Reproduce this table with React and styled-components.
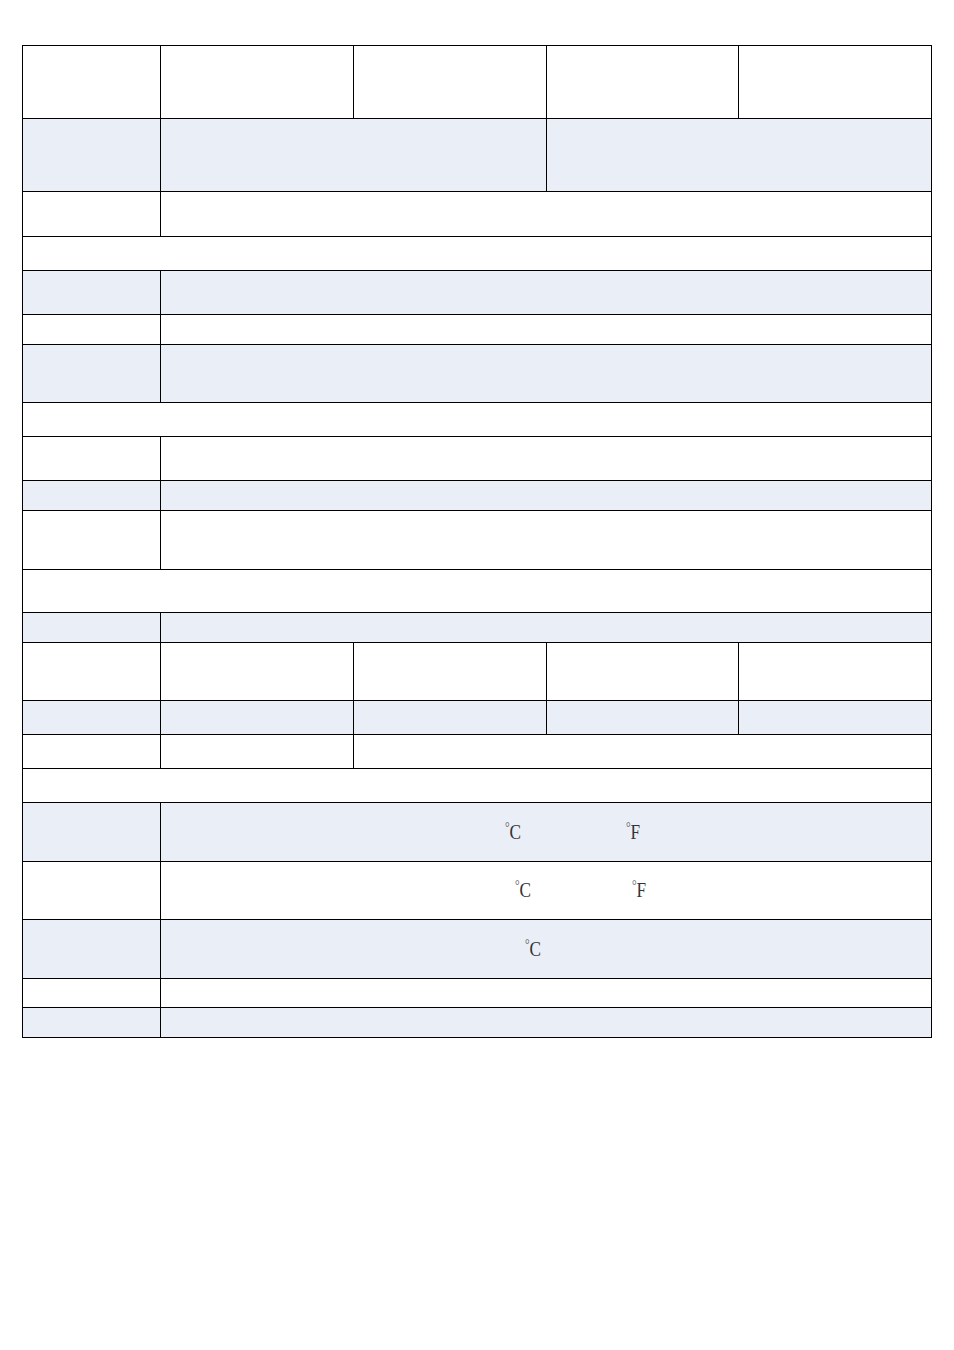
import React from "react";
import styled, { createGlobalStyle } from "styled-components";

const Global = createGlobalStyle`
  html, body { margin: 0; padding: 0; background: #ffffff; }
  body { font-family: "Liberation Serif", serif; }
`;

const COLS = "137px 192px 192px 191px 192px";
const BLUE = "#eaeff7";

const Page = styled.div`
  width: 954px;
  min-height: 1350px;
  padding: 45px 0 0 22px;
  box-sizing: border-box;
`;

const Table = styled.div`
  width: 910px;
  box-sizing: border-box;
  display: flex;
  flex-direction: column;
  gap: 1px;
  padding: 1px;
  background: #000000;
`;

const Row = styled.div`
  display: grid;
  grid-template-columns: ${COLS};
  gap: 1px;
  height: ${(p) => p.$h}px;
`;

const Cell = styled.div`
  grid-column: span ${(p) => p.$span || 1};
  background: ${(p) => (p.$blue ? BLUE : "#ffffff")};
  display: flex;
  align-items: center;
`;

const Unit = styled.span`
  margin-left: ${(p) => p.$ml}px;
  font-family: "Liberation Serif", "DejaVu Serif", serif;
  font-size: 21px;
  line-height: 1;
  color: #333;
  display: inline-flex;
  align-items: flex-start;
  transform: scaleX(0.82);
  transform-origin: left center;
`;

const Deg = styled.span`
  font-size: 14px;
  line-height: 1;
  margin-top: -1px;
  color: #555;
`;

const rows = [
  { h: 72, cells: [{}, {}, {}, {}, {}] },
  { h: 72, blue: true, cells: [{}, { span: 2 }, { span: 2 }] },
  { h: 44, cells: [{}, { span: 4 }] },
  { h: 33, cells: [{ span: 5 }] },
  { h: 43, blue: true, cells: [{}, { span: 4 }] },
  { h: 29, cells: [{}, { span: 4 }] },
  { h: 57, blue: true, cells: [{}, { span: 4 }] },
  { h: 33, cells: [{ span: 5 }] },
  { h: 43, cells: [{}, { span: 4 }] },
  { h: 29, blue: true, cells: [{}, { span: 4 }] },
  { h: 58, cells: [{}, { span: 4 }] },
  { h: 42, cells: [{ span: 5 }] },
  { h: 29, blue: true, cells: [{}, { span: 4 }] },
  { h: 57, cells: [{}, {}, {}, {}, {}] },
  { h: 33, blue: true, cells: [{}, {}, {}, {}, {}] },
  { h: 33, cells: [{}, {}, { span: 3 }] },
  { h: 33, cells: [{ span: 5 }] },
  {
    h: 58,
    blue: true,
    cells: [{}, { span: 4, units: [["C", 344], ["F", 101]] }],
  },
  { h: 57, cells: [{}, { span: 4, units: [["C", 354], ["F", 97]] }] },
  { h: 58, blue: true, cells: [{}, { span: 4, units: [["C", 364]] }] },
  { h: 28, cells: [{}, { span: 4 }] },
  { h: 29, blue: true, cells: [{}, { span: 4 }] },
];

export default function App() {
  return (
    <>
      <Global />
      <Page>
        <Table>
          {rows.map((r, i) => (
            <Row key={i} $h={r.h}>
              {r.cells.map((c, j) => (
                <Cell key={j} $span={c.span} $blue={r.blue}>
                  {c.units &&
                    c.units.map(([u, ml], k) => (
                      <Unit key={k} $ml={ml}>
                        <Deg>°</Deg>
                        {u}
                      </Unit>
                    ))}
                </Cell>
              ))}
            </Row>
          ))}
        </Table>
      </Page>
    </>
  );
}
